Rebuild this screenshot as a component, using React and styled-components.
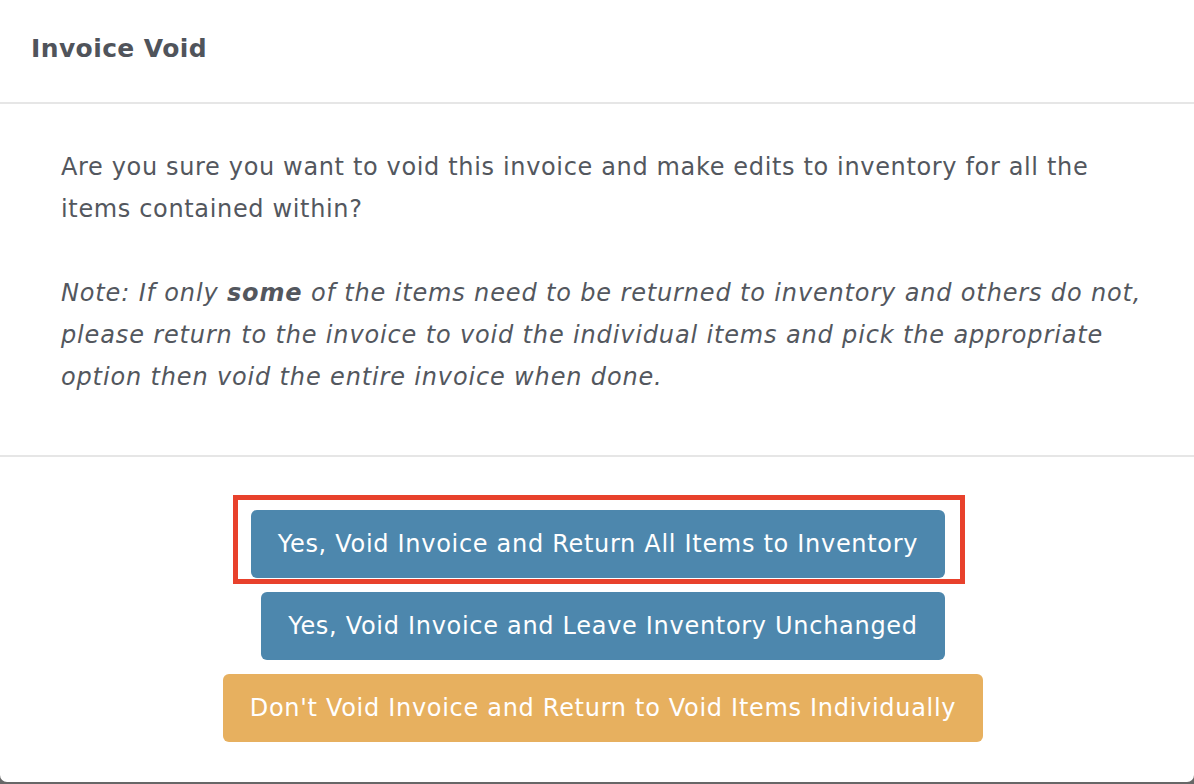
import React from "react";
import styled, { createGlobalStyle } from "styled-components";

const Global = createGlobalStyle`
  html, body { margin: 0; padding: 0; background: #676767; }
  body { font-family: "DejaVu Sans", "Noto Sans", sans-serif; }
  * { box-sizing: border-box; }
`;

const Modal = styled.div`
  width: 1194px;
  height: 782px;
  background: #ffffff;
  border-radius: 0 0 7px 7px;
  display: flex;
  flex-direction: column;
  overflow: hidden;
`;

const Header = styled.div`
  height: 104px;
  flex: none;
  display: flex;
  align-items: center;
  padding: 0 31px 6px;
  border-bottom: 2px solid #e6e6e6;
`;

const Title = styled.h1`
  margin: 0;
  font-size: 25px;
  font-weight: 600;
  color: #50545b;
  letter-spacing: 0.4px;
`;

const Body = styled.div`
  padding: 42px 61px 0;
  height: 353px;
  flex: none;
  border-bottom: 2px solid #e6e6e6;
`;

const Para = styled.p`
  margin: 0 0 ${(p) => p.$gap || 0}px;
  font-size: 24px;
  line-height: 42px;
  color: #53575e;
  letter-spacing: ${(p) => (p.$italic ? 0.85 : 0.65)}px;
  font-style: ${(p) => (p.$italic ? "italic" : "normal")};
  white-space: nowrap;
`;

const Strong = styled.b`
  font-weight: 700;
`;

const Footer = styled.div`
  display: flex;
  flex-direction: column;
  align-items: center;
  gap: 14px;
  padding: 53px 0 0 12px;
`;

const Button = styled.button`
  position: relative;
  height: 68px;
  padding: 0 27px;
  border: none;
  border-radius: 6px;
  background: ${(p) => (p.$variant === "warning" ? "#e7b05f" : "#4d87ad")};
  color: #ffffff;
  font-family: "DejaVu Sans", "Noto Sans", sans-serif;
  font-size: 24px;
  letter-spacing: 0.7px;
  margin-right: ${(p) => p.$shift || 0}px;
  cursor: pointer;
`;

const Highlight = styled.span`
  position: absolute;
  left: -18px;
  right: -20px;
  top: -15px;
  bottom: -6px;
  border: 5px solid #e8412c;
  pointer-events: none;
`;

export default function App() {
  return (
    <>
      <Global />
      <Modal>
        <Header>
          <Title>Invoice Void</Title>
        </Header>
        <Body>
          <Para $gap={42}>
            Are you sure you want to void this invoice and make edits to inventory for all the
            <br />
            items contained within?
          </Para>
          <Para $italic>
            Note: If only <Strong>some</Strong> of the items need to be returned to inventory and others do not,
            <br />
            please return to the invoice to void the individual items and pick the appropriate
            <br />
            option then void the entire invoice when done.
          </Para>
        </Body>
        <Footer>
          <Button $shift={10}>
            Yes, Void Invoice and Return All Items to Inventory
            <Highlight />
          </Button>
          <Button>Yes, Void Invoice and Leave Inventory Unchanged</Button>
          <Button $variant="warning">Don't Void Invoice and Return to Void Items Individually</Button>
        </Footer>
      </Modal>
    </>
  );
}
